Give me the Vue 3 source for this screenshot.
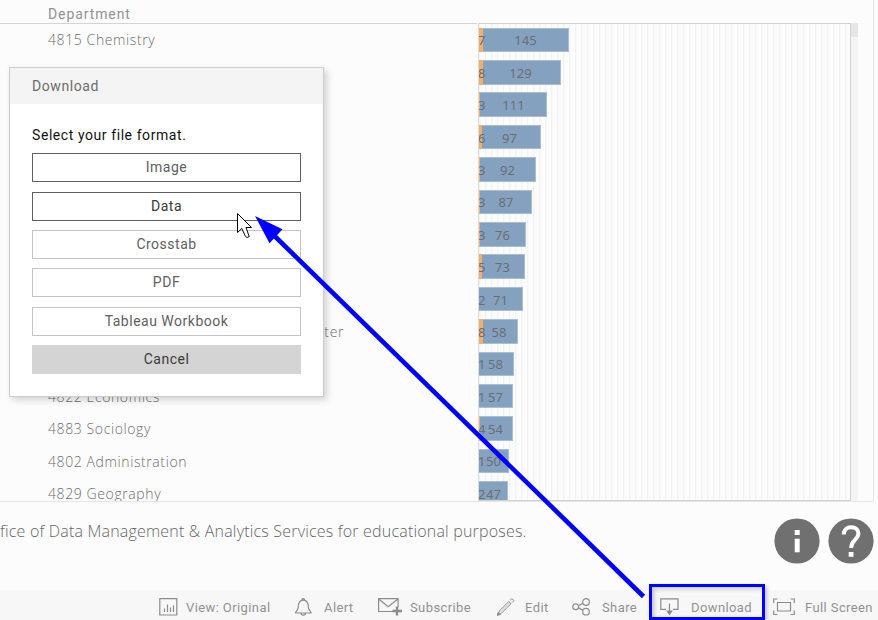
<script setup>
const rows = [
  { dept: '4815 Chemistry', a: 7, b: 145, aw: 4, w: 90, mid: 46.5 },
  { dept: '4820 English and', a: 8, b: 129, aw: 4, w: 82, mid: 41.5 },
  { dept: '4830 Psychology', a: 3, b: 111, aw: 1, w: 67.5, mid: 34.5 },
  { dept: '4818 Physics', a: 6, b: 97, aw: 3, w: 61.5, mid: 30.5 },
  { dept: '4812 History', a: 3, b: 92, aw: 1, w: 57, mid: 28.5 },
  { dept: '4825 Art', a: 3, b: 87, aw: 1, w: 53, mid: 27 },
  { dept: '4816 Mathematics', a: 3, b: 76, aw: 1, w: 47, mid: 23.5 },
  { dept: '4835 Nursing', a: 5, b: 73, aw: 2.5, w: 46, mid: 23.5 },
  { dept: '4840 Education', a: 2, b: 71, aw: 0, w: 43.5, mid: 21.5 },
  { dept: '4850 Environmental Science Center', a: 8, b: 58, aw: 4, w: 38.5, mid: 20, wide: true },
  { dept: '4826 Music', a: 1, b: 58, aw: 0, w: 35, mid: 16.5 },
  { dept: '4822 Economics', a: 1, b: 57, aw: 0, w: 34, mid: 16.5 },
  { dept: '4883 Sociology', a: 4, b: 54, aw: 1, w: 34, mid: 16.5 },
  { dept: '4802 Administration', a: 1, b: 50, aw: 0, w: 30, mid: 14.5 },
  { dept: '4829 Geography', a: 2, b: 47, aw: 0, w: 29, mid: 14.5 },
]
const formats = [
  { label: 'Image', cls: 'dark' },
  { label: 'Data', cls: 'dark hover' },
  { label: 'Crosstab', cls: '' },
  { label: 'PDF', cls: '' },
  { label: 'Tableau Workbook', cls: '' },
  { label: 'Cancel', cls: 'cancel' },
]
</script>

<template>
  <div class="page">
    <section class="viz">
      <header class="viz-head"><span>Department</span></header>
      <div class="viz-body">
        <div class="names">
          <div v-for="r in rows" :key="r.dept" class="name" :class="{ wide: r.wide }"><span>{{ r.dept }}</span></div>
        </div>
        <div class="chart">
          <div v-for="r in rows" :key="r.dept" class="slot">
            <div class="bar" :style="{ width: r.w + 'px' }">
              <i class="first" :style="{ width: r.aw + 'px' }"></i>
              <span class="num a">{{ r.a }}</span>
              <span class="num b" :style="{ left: r.mid + 'px' }">{{ r.b }}</span>
            </div>
          </div>
        </div>
        <div class="scroll"><div class="thumb"></div></div>
      </div>
    </section>

    <section class="note">
      <p>fice of Data Management &amp; Analytics Services for educational purposes.</p>
      <div class="rounds">
        <svg width="46" height="46" viewBox="0 0 46 46">
          <circle cx="23" cy="23" r="22.6" fill="#707070" />
          <rect x="20.7" y="12" width="5" height="5" fill="#fff" />
          <rect x="20.7" y="20.7" width="5" height="13.6" fill="#fff" />
        </svg>
        <svg width="46" height="46" viewBox="0 0 46 46">
          <circle cx="23" cy="23" r="22.6" fill="#707070" />
          <path d="M15.8 16.5C15.8 11.7 18.7 9.3 23.1 9.3C27.6 9.3 30.4 12 30.4 15.6C30.4 21.8 23.1 21.6 23.1 30" fill="none" stroke="#fff" stroke-width="4" />
          <rect x="20.7" y="34" width="4.8" height="4.8" fill="#fff" />
        </svg>
      </div>
    </section>

    <footer class="toolbar">
      <div class="tool view">
        <svg width="20" height="18" viewBox="0 0 20 18"><path d="M.8.7h17v16.300h-17zM5.500 14v-3.500M8.500 14v-7.500M11.500 14v-4.500M14.500 14v-6.500" /></svg>
        <span>View: Original</span>
      </div>
      <div class="tool alert">
        <svg width="20" height="18" viewBox="0 0 20 18"><path d="M1.500 15C1.200 13.500 4 12.500 4.200 9.500C4.300 5 5.500 2.200 9.300 2.200S14.300 5 14.400 9.500C14.600 12.500 17.400 13.500 17.100 15ZM8 2.200C8 .1 10.600 .1 10.600 2.200M7.200 15.400C7.200 17.600 11.400 17.600 11.400 15.400" /></svg>
        <span>Alert</span>
      </div>
      <div class="tool subscribe">
        <svg width="25" height="18" viewBox="0 0 25 18"><path d="M15 13.500H.6V.7h19.500v8.500M.6 1L10.200 8.800L20 1" /><path d="M19 8.500v9M14.500 13h9.500" stroke-width="2.400" /></svg>
        <span>Subscribe</span>
      </div>
      <div class="tool edit">
        <svg width="18" height="18" viewBox="0 0 18 18"><path d="M.8 16.800L2.500 12.800L11.800 3.500L14 5.700L4.700 15ZM13 2.300L14.500 .9Q15 .6 15.500 1L16.600 2.100Q17 2.600 16.600 3.100L15.200 4.500" stroke-width="1" /><path d="M3.600 13.900L12.900 4.600" stroke-width=".5" /><path d="M.4 17.300L1.200 14.900L2.800 16.300Z" fill="#8c8c8c" /></svg>
        <span>Edit</span>
      </div>
      <div class="tool share">
        <svg width="20" height="18" viewBox="0 0 20 18"><circle cx="3.700" cy="8.700" r="2.900" /><circle cx="14" cy="4" r="3.300" /><circle cx="14" cy="13.700" r="3.300" /><path d="M6.400 7.500L11 5.400M6.400 9.900L11 12.200" /></svg>
        <span>Share</span>
      </div>
      <div class="tool download">
        <svg width="20" height="18" viewBox="0 0 20 18"><path d="M6 11.300H.8V.8H18v10.500H13M9.500 5.500v8" /><path d="M7.200 13h4.600L9.500 16.500Z" fill="#8c8c8c" /></svg>
        <span>Download</span>
      </div>
      <div class="tool full">
        <svg width="23" height="18" viewBox="0 0 23 18"><path d="M4.500 4.500h13v8.500h-13zM4.500 1H.7V5M17.500 1h3.800V5M4.500 16.500H.7V12.500M17.500 16.500h3.800V12.500" /></svg>
        <span>Full Screen</span>
      </div>
    </footer>

    <div class="dialog">
      <h2>Download</h2>
      <div class="dialog-body">
        <p>Select your file format.</p>
        <button v-for="f in formats" :key="f.label" :class="f.cls">{{ f.label }}</button>
      </div>
    </div>

    <div class="focus-box"></div>
    <svg class="overlay" width="878" height="620" viewBox="0 0 878 620">
      <path d="M271 232.500L643.500 596.500" stroke="#0000ff" stroke-width="4.600" />
      <path d="M255 216L282.500 229.300L269.500 243.300Z" fill="#0000ff" />
      <path d="M237.500 213.500V232.500L241.800 228.500L245.500 236.500Q247 238.500 249.200 236.500L246 227.500H251.500Z" fill="#fff" stroke="#000" stroke-width="1" />
    </svg>
  </div>
</template>

<style>
body { margin: 0; background: #fcfcfc; overflow: hidden; }
</style>

<style scoped>
* { box-sizing: border-box; }
.page { position: relative; width: 878px; height: 620px; overflow: hidden; display: flex; flex-direction: column; background: #fcfcfc; font-family: "Noto Sans", sans-serif; color: #8d8d8d; }
.viz { width: 874px; height: 502px; border-right: 1px solid #e8e8e8; border-bottom: 1px solid #e6e6e6; display: flex; flex-direction: column; overflow: hidden; }
.viz-head { height: 23px; flex: none; padding: 4px 0 0 48px; font: 14px/20px Roboto, sans-serif; letter-spacing: .9px; color: #929292; }
.viz-body { height: 478px; display: flex; overflow: hidden; }
.names { width: 477px; border-top: 1px solid #d4d4d4; overflow: hidden; padding-top: .3px; }
.name { height: 32.4px; padding-left: 48px; display: flex; align-items: center; font: 300 14px/20px "Open Sans", sans-serif; letter-spacing: .6px; white-space: pre; color: #6c6c6c; }
.name.wide { justify-content: flex-end; padding-right: 133px; }
.chart { width: 373px; margin-left: 1px; border: 1px solid #d2d2d2; border-left-color: #dcdcdc; background: repeating-linear-gradient(90deg, #f2f2f2 0 1px, #f9f9f9 1px 2px, transparent 2px 6px); overflow: hidden; }
.slot { height: 32.4px; padding-top: 3.700px; }
.bar { position: relative; height: 24.500px; background: #85a1c0; border: 1px solid #a9bdd3; border-left: 0; }
.first { position: absolute; left: 0; top: -1px; height: 24.500px; background: #f3ae6b; }
.num { position: absolute; top: 1.700px; font: 13px/20px "Noto Sans", sans-serif; color: #6c6e72; }
.num.a { left: 0; margin-left: -1px; }
.num.b { transform: translateX(-50%); }
.scroll { width: 7px; background: #f4f4f4; }
.thumb { height: 14px; background: #e6e6e6; }
.note { height: 88px; display: flex; justify-content: space-between; padding: 16px 4px 0 0; }
.note p { margin: 2px 0 0; font: 300 16px/22px "Open Sans", sans-serif; letter-spacing: .19px; white-space: nowrap; color: #666; }
.rounds { display: flex; gap: 8px; }
.toolbar { height: 30px; background: #f7f7f7; display: grid; grid-template-columns: 135px 84px 119px 75px 88px 113px 1fr; align-items: center; padding: 4px 0 0 159px; }
.tool { display: flex; align-items: center; font: 13px/18px Roboto, sans-serif; letter-spacing: .4px; white-space: nowrap; color: #929292; }
.tool span { padding-top: 1px; }
.tool svg { flex: none; fill: none; stroke: #8c8c8c; stroke-width: 1.2; }
.view svg { margin-right: 7px; }
.alert svg { margin-right: 10px; }
.subscribe svg { margin-right: 7px; }
.edit svg { margin-right: 10px; }
.share svg { margin-right: 10px; }
.download svg { margin-right: 11px; }
.full svg { margin-right: 9px; }
.dialog { position: absolute; left: 9px; top: 67px; width: 315px; height: 330px; background: #fff; border: 1px solid #ccc; box-shadow: 3px 3px 7px rgba(0,0,0,.17); font-family: Roboto, sans-serif; }
.dialog h2 { margin: 0; height: 36px; padding-left: 22px; background: #f4f4f4; font-size: 14px; font-weight: 400; line-height: 36px; letter-spacing: .58px; color: #6c6c6c; }
.dialog-body { padding: 20px 22px; display: flex; flex-direction: column; gap: 9.400px; }
.dialog-body p { margin: 0 0 -1.200px; font-size: 14px; line-height: 22px; height: 21px; letter-spacing: .57px; color: #111; }
.dialog button { height: 29px; flex: none; padding: 0; border: 1px solid #c4c4c4; background: #fff; font: 14px/27px Roboto, sans-serif; letter-spacing: .5px; color: #606060; }
.dialog button.dark { border-color: #606060; }
.dialog button.hover { color: #3a3a3a; }
.dialog button.cancel { background: #d4d4d4; border-color: #d4d4d4; color: #3a3a3a; }
.focus-box { position: absolute; left: 649px; top: 584px; width: 116px; height: 36px; border: 3px solid #00f; box-shadow: 2px 2px 4px rgba(0,0,0,.22), inset 2px 2px 4px rgba(0,0,0,.22); }
.overlay { position: absolute; left: 0; top: 0; pointer-events: none; }
</style>
